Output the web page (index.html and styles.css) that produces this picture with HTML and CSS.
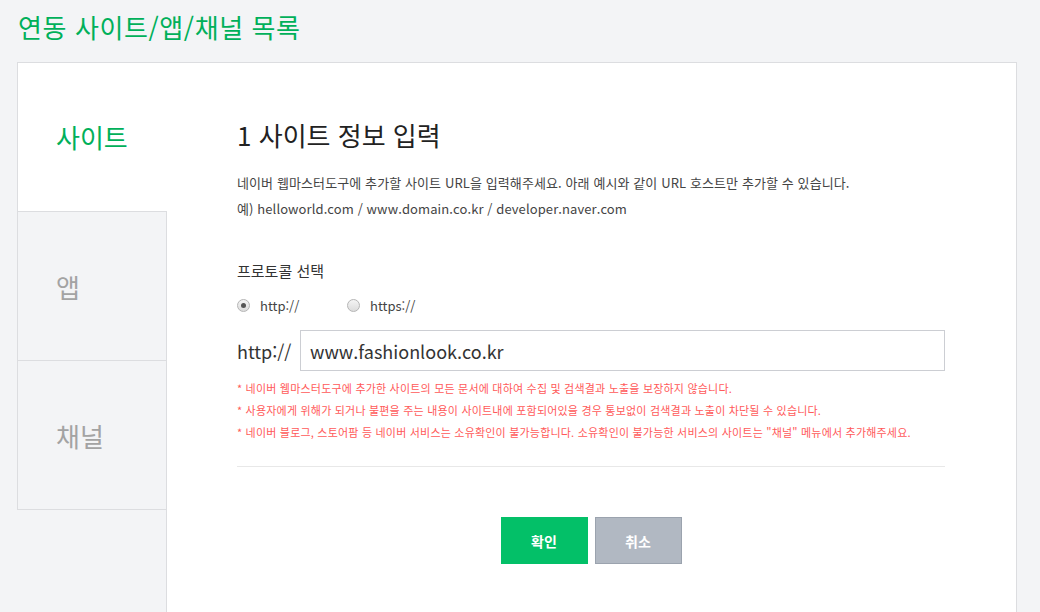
FILE: index.html
```html
<!DOCTYPE html>
<html lang="ko">
<head>
<meta charset="utf-8">
<title>연동 사이트/앱/채널 목록</title>
<link rel="stylesheet" href="styles.css">
</head>
<body>
<h1 class="page-title">연동 사이트/앱/채널 목록</h1>
<div class="panel">
  <nav class="nav">
    <div class="tab tab-active">사이트</div>
    <div class="tab">앱</div>
    <div class="tab tab-last">채널</div>
  </nav>
  <section class="content">
    <h2 class="step-title">1 사이트 정보 입력</h2>
    <p class="desc">네이버 웹마스터도구에 추가할 사이트 URL을 입력해주세요. 아래 예시와 같이 URL 호스트만 추가할 수 있습니다.<br>예) helloworld.com / www.domain.co.kr / developer.naver.com</p>
    <h3 class="label">프로토콜 선택</h3>
    <div class="radios">
      <label class="radio"><span class="dot dot-on"></span>http://</label>
      <label class="radio"><span class="dot"></span>https://</label>
    </div>
    <div class="url-row">
      <span class="proto">http://</span>
      <div class="url-input">www.fashionlook.co.kr</div>
    </div>
    <ul class="notes">
      <li>* 네이버 웹마스터도구에 추가한 사이트의 모든 문서에 대하여 수집 및 검색결과 노출을 보장하지 않습니다.</li>
      <li>* 사용자에게 위해가 되거나 불편을 주는 내용이 사이트내에 포함되어있을 경우 통보없이 검색결과 노출이 차단될 수 있습니다.</li>
      <li>* 네이버 블로그, 스토어팜 등 네이버 서비스는 소유확인이 불가능합니다. 소유확인이 불가능한 서비스의 사이트는 "채널" 메뉴에서 추가해주세요.</li>
    </ul>
    <hr class="divider">
    <div class="buttons">
      <button class="btn btn-ok">확인</button>
      <button class="btn btn-cancel">취소</button>
    </div>
  </section>
</div>
</body>
</html>
```
FILE: styles.css
```css
html, body {
  margin: 0;
  padding: 0;
}
body {
  background: #f3f4f6;
  font-family: "Noto Sans CJK KR", "Noto Sans", sans-serif;
  color: #333;
  height: 612px;
  overflow: hidden;
}
.page-title {
  margin: 0;
  height: 62px;
  line-height: 54px;
  padding-left: 18px;
  font-size: 26px;
  font-weight: 400;
  color: #00b05a;
  letter-spacing: 0.6px;
}
.panel {
  display: flex;
  margin-left: 17px;
  width: 1000px;
  min-height: 560px;
}
.nav {
  width: 149px;
  flex: none;
}
.tab {
  height: 148px;
  border-top: 1px solid #dcdde0;
  border-left: 1px solid #dcdde0;
  background: #f3f4f6;
  display: flex;
  align-items: center;
  padding-left: 38px;
  font-size: 26px;
  color: #a3a3a3;
}
.tab-last {
  border-bottom: 1px solid #dcdde0;
}
.tab-active {
  background: #fff;
  color: #00b05a;
  margin-right: -1px;
  position: relative;
  z-index: 1;
  padding-bottom: 2px;
  height: 146px;
}
.content {
  flex: 1;
  background: #fff;
  border-top: 1px solid #dcdde0;
  border-left: 1px solid #dcdde0;
  border-right: 1px solid #dcdde0;
  padding: 57px 70px 0 70px;
}
.step-title {
  margin: 0;
  font-size: 26px;
  line-height: 30px;
  font-weight: 400;
  color: #222;
}
.desc {
  margin: 20px 0 0;
  font-size: 13px;
  line-height: 26px;
  color: #444;
  letter-spacing: 0.1px;
}
.label {
  margin: 39px 0 0;
  font-size: 15px;
  line-height: 20px;
  font-weight: 400;
  color: #333;
}
.radios {
  display: flex;
  margin-top: 14px;
  height: 20px;
  align-items: center;
  font-size: 13px;
  color: #444;
}
.radio {
  display: flex;
  align-items: center;
  width: 110px;
}
.dot {
  width: 11px;
  height: 11px;
  border-radius: 50%;
  border: 1px solid #b5b5b5;
  background: linear-gradient(#f4f4f4, #dcdcdc);
  margin-right: 10px;
  display: flex;
  align-items: center;
  justify-content: center;
}
.dot-on::after {
  content: "";
  width: 5px;
  height: 5px;
  border-radius: 50%;
  background: #555;
}
.url-row {
  display: flex;
  align-items: center;
  margin-top: 15px;
  width: 708px;
}
.proto {
  width: 63px;
  flex: none;
  font-size: 18px;
  color: #333;
}
.url-input {
  flex: 1;
  height: 39px;
  border: 1px solid #ccced3;
  padding-left: 9px;
  display: flex;
  align-items: center;
  font-size: 18px;
  color: #333;
}
.notes {
  list-style: none;
  margin: 6px 0 0;
  padding: 0;
  font-size: 11px;
  line-height: 22px;
  color: #ff5a5a;
  letter-spacing: 0.2px;
}
.divider {
  margin: 23px 0 0;
  width: 708px;
  border: 0;
  border-top: 1px solid #e8e8e8;
}
.buttons {
  display: flex;
  justify-content: center;
  gap: 7px;
  width: 708px;
  margin-top: 50px;
}
.btn {
  width: 87px;
  height: 47px;
  border: 1px solid transparent;
  font-family: "Noto Sans CJK KR", sans-serif;
  font-size: 14px;
  font-weight: 700;
  color: #fff;
}
.btn-ok {
  background: #03c068;
  border-color: #03c068;
}
.btn-cancel {
  background: #b1b8c2;
  border-color: #9ba3ae;
}
```
